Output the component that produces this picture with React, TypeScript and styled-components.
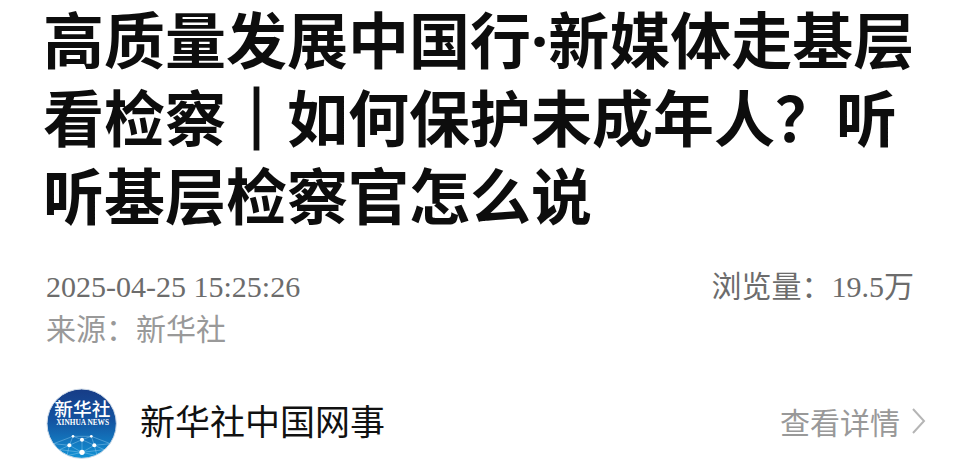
import React from "react";
import styled, { createGlobalStyle } from "styled-components";

const Global = createGlobalStyle`
  * { box-sizing: border-box; }
  body { margin: 0; background: #fff; font-family: "Noto Sans CJK SC", sans-serif; }
`;
const Page = styled.main`
  padding: 2px 34px 0 43px;
`;
const Title = styled.h1`
  margin: 0;
  font-family: "Noto Sans", "Noto Sans CJK SC", sans-serif;
  font-size: 61px;
  line-height: 78px;
  font-weight: 700;
  color: #0d0d0d;
`;
const Divider = styled.span`
  -webkit-text-stroke: 3px #0d0d0d;
`;
const Details = styled.a`
  display: flex;
  align-items: center;
  gap: 12px;
  padding-bottom: 6px;
  color: #999;
  font-size: 30px;
  line-height: 42px;
  text-decoration: none;
`;
const Info = styled.div`
  padding-left: 3px;
`;
const Meta = styled.div`
  display: flex;
  justify-content: space-between;
  margin-top: 30px;
  padding-right: 12px;
  font-family: "Liberation Serif", "Noto Sans CJK SC", sans-serif;
  font-size: 30px;
  line-height: 42px;
  color: #6c6c6c;
`;
const Source = styled.div`
  font-size: 30px;
  line-height: 38px;
  color: #999;
`;
const Account = styled.section`
  display: flex;
  align-items: center;
  justify-content: space-between;
  margin-top: 42px;
`;
const Author = styled.div`
  display: flex;
  align-items: center;
  gap: 22px;
`;
const Name = styled.span`
  padding-bottom: 8px;
  font-size: 35px;
  line-height: 52px;
  color: #111;
`;
const Logo = styled.svg`
  width: 72px;
  height: 72px;
`;

function XinhuaLogo() {
  return (
    <Logo viewBox="27 27 216 216" role="img" aria-label="新华社">
      <defs>
        <linearGradient id="disc" x1="0" y1="0" x2="0" y2="1">
          <stop offset="0" stopColor="#173c86" />
          <stop offset="0.45" stopColor="#1453a0" />
          <stop offset="1" stopColor="#1293d6" />
        </linearGradient>
        <clipPath id="rim"><circle cx="134" cy="134" r="103" /></clipPath>
      </defs>
      <circle cx="134" cy="134" r="104" fill="url(#disc)" stroke="#cfdbe8" strokeWidth="3" />
      <g clipPath="url(#rim)">
        <path
          d="M108 172H163M108 172L135 182L163 172M108 172L97 199L50 194M163 172L172 199L220 194M108 172L50 194M163 172L220 194M135 182L97 199L135 220L172 199ZM135 182V220M97 199L68 212L135 220L202 212L172 199M97 199L90 230L135 220L180 230L172 199"
          fill="none" stroke="#9bd4f2" strokeOpacity="0.65" strokeWidth="2"
        />
        <g fill="#fff">
          <circle cx="108" cy="172" r="4" />
          <circle cx="163" cy="172" r="4" />
          <circle cx="135" cy="182" r="6" />
          <circle cx="97" cy="199" r="6" />
          <circle cx="172" cy="199" r="6" />
          <circle cx="135" cy="220" r="8" />
        </g>
      </g>
      <text x="136" y="111" textAnchor="middle" fontFamily="'Noto Sans CJK SC', sans-serif" fontSize="56" fontWeight="500" fill="#fff">新华社</text>
      <text x="137" y="138" textAnchor="middle" fontFamily="'Liberation Serif', serif" fontSize="22" fontWeight="700" fill="#fff">XINHUA NEWS</text>
    </Logo>
  );
}

export default function App() {
  return (
    <Page>
      <Global />
      <Title>高质量发展中国行·新媒体走基层看检察<Divider>｜</Divider>如何保护未成年人？听听基层检察官怎么说</Title>
      <Info>
        <Meta><time>2025-04-25 15:25:26</time><span>浏览量：19.5万</span></Meta>
        <Source>来源：新华社</Source>
        <Account>
          <Author>
            <XinhuaLogo />
            <Name>新华社中国网事</Name>
          </Author>
          <Details href="#">查看详情
            <svg width="14" height="26" viewBox="0 0 14 26" fill="none" stroke="#b5b5b5" strokeWidth="2"><path d="M1 1l11 12L1 25" /></svg>
          </Details>
        </Account>
      </Info>
    </Page>
  );
}
